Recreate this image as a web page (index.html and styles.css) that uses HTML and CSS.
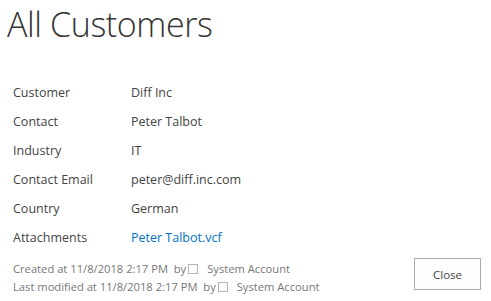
FILE: index.html
```html
<!DOCTYPE html>
<html>
<head>
    <link rel="stylesheet" href="styles.css">
</head>
<body>
    <div class="dialog">
        <h1 class="title">All Customers</h1>

        <table class="fields">
            <tr><td class="label">Customer</td><td>Diff Inc</td></tr>
            <tr><td class="label">Contact</td><td>Peter Talbot</td></tr>
            <tr><td class="label">Industry</td><td>IT</td></tr>
            <tr><td class="label">Contact Email</td><td>peter@diff.inc.com</td></tr>
            <tr><td class="label">Country</td><td>German</td></tr>
            <tr><td class="label">Attachments</td><td><a href="#" class="link">Peter Talbot.vcf</a></td></tr>
        </table>

        <div class="footer">
            <div class="info">
                <div>Created at 11/8/2018 2:17 PM &nbsp;by<span class="presence"></span> System Account</div>
                <div>Last modified at 11/8/2018 2:17 PM &nbsp;by<span class="presence"></span> System Account</div>
            </div>
            <button class="close">Close</button>
        </div>
    </div>
</body>
</html>
```

FILE: styles.css
```css
body {
    margin: 0;
    padding: 0;
    background-color: white;
    font-family: "Open Sans", "Liberation Sans", sans-serif;
    color: #444;
}

.dialog {
    width: 491px;
    height: 301px;
    box-sizing: border-box;
    padding: 0 10px 0 7px;
}

.title {
    margin: 0;
    padding-top: 1px;
    font-size: 34px;
    font-weight: 300;
    line-height: 46px;
    color: #333;
    letter-spacing: -0.4px;
}

.fields {
    margin-top: 31px;
    margin-left: 2px;
    border-collapse: collapse;
    font-size: 12.5px;
}

.fields td {
    height: 29px;
    padding: 0 0 0 4px;
    vertical-align: middle;
    white-space: nowrap;
}

.fields td.label {
    width: 114px;
}

.link {
    color: #0072c6;
    text-decoration: none;
}

.footer {
    display: flex;
    justify-content: space-between;
    align-items: flex-start;
    margin-top: 8px;
    padding-left: 6px;
}

.info {
    font-size: 11.2px;
    color: #777;
    line-height: 18px;
}

.presence {
    display: inline-block;
    width: 8px;
    height: 8px;
    border: 1px solid #b5b5b5;
    margin: 0 6px 0 2px;
    vertical-align: -1px;
}

.close {
    width: 67px;
    height: 32px;
    margin-top: -2px;
    border: 1px solid #ababab;
    background-color: #fdfdfd;
    font-family: inherit;
    font-size: 11.5px;
    color: #444;
    cursor: pointer;
}

.close:hover {
    background-color: #e6f2fa;
    border-color: #92c0e0;
}
```
